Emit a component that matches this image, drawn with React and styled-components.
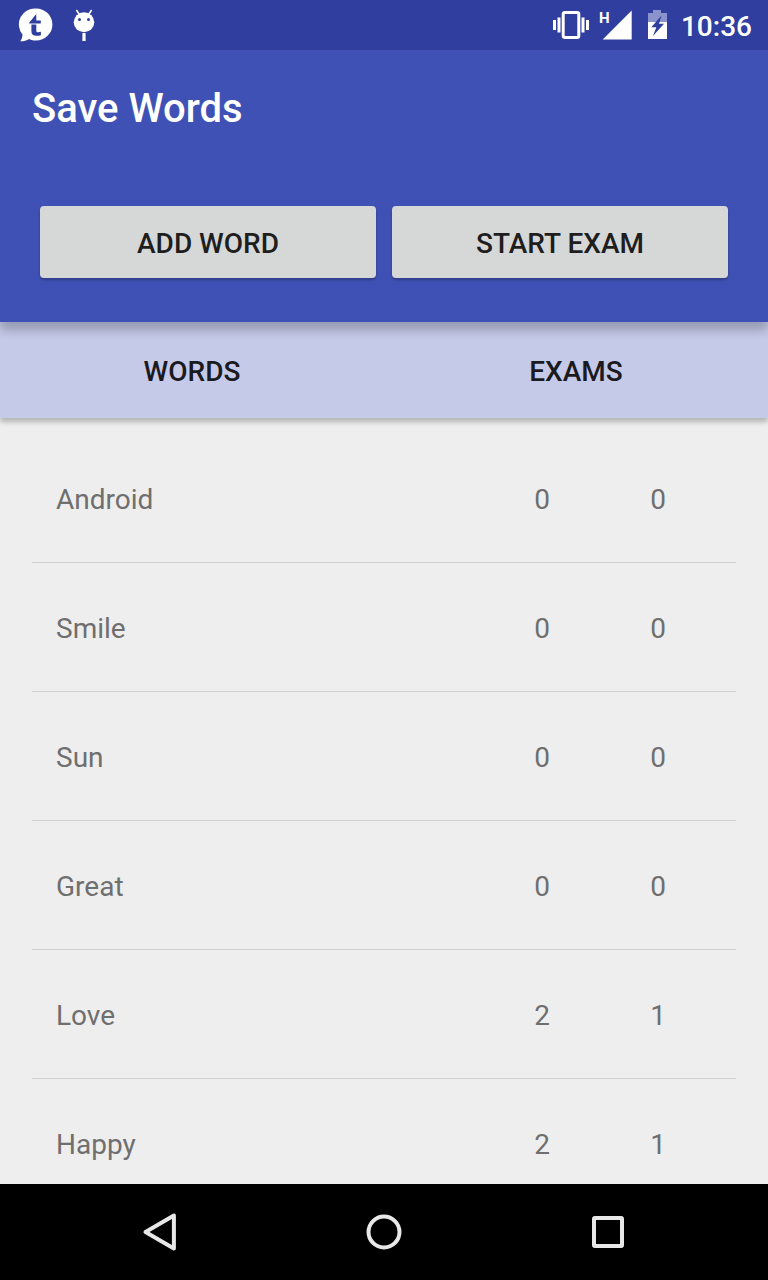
import React from "react";
import styled, { createGlobalStyle } from "styled-components";

const GlobalStyle = createGlobalStyle`
  *, *::before, *::after { box-sizing: border-box; }
  body {
    margin: 0;
    background: #eeeeee;
    font-family: Roboto, "Noto Sans", sans-serif;
  }
  button { font-family: inherit; }
`;

const Screen = styled.div`
  display: flex;
  flex-direction: column;
  height: 100vh;
  background: #eeeeee;
`;

const StatusBar = styled.div`
  display: flex;
  flex: none;
  align-items: center;
  justify-content: space-between;
  height: 50px;
  padding: 0 16px 0 18px;
  background: #303f9f;
  color: #ffffff;
`;

const StatusGroup = styled.div`
  display: flex;
  align-items: center;
  gap: ${(p) => p.$gap}px;
`;

const Clock = styled.time`
  padding-top: 4px;
  font-size: 28px;
  font-weight: 500;
  line-height: 32px;
`;

const Header = styled.header`
  position: relative;
  z-index: 2;
  flex: none;
  padding: 33px 32px 44px;
  background: #3f51b5;
  box-shadow: 0 8px 10px rgba(0, 0, 0, 0.24);
`;

const Title = styled.h1`
  margin: 0 0 71px;
  color: #ffffff;
  font-size: 40px;
  font-weight: 500;
  line-height: 52px;
`;

const Actions = styled.div`
  display: flex;
  gap: 16px;
  padding: 0 8px;
`;

const RaisedButton = styled.button`
  flex: 1;
  height: 72px;
  padding: 4px 0 0;
  border: 0;
  border-radius: 4px;
  background: #d6d7d7;
  box-shadow: 0 2px 3px rgba(0, 0, 0, 0.26);
  color: #1e1e1e;
  font-size: 28px;
  font-weight: 500;
  line-height: 32px;
`;

const TabBar = styled.nav`
  position: relative;
  z-index: 1;
  display: flex;
  flex: none;
  background: #c5cae9;
  box-shadow: 0 4px 5px rgba(0, 0, 0, 0.24);
`;

const Tab = styled.button`
  flex: 1;
  height: 96px;
  padding: 4px 0 0;
  border: 0;
  background: transparent;
  color: #1a1a1f;
  font-size: 28px;
  font-weight: 500;
  line-height: 32px;
`;

const List = styled.main`
  flex: 1;
  min-height: 0;
  padding: 16px 32px 0;
  overflow-y: auto;
  scrollbar-width: none;
`;

const WordTable = styled.table`
  width: 100%;
  border-collapse: separate;
  border-spacing: 0;
  table-layout: fixed;
  color: #6f6f6f;
  font-size: 28px;
  line-height: 32px;
`;

const WordCell = styled.th`
  height: 129px;
  padding: 4px 24px 0;
  border-bottom: 1px solid #d2d2d2;
  font-weight: 400;
  text-align: left;
`;

const CountCell = styled.td`
  width: ${(p) => (p.$last ? 136 : 116)}px;
  padding: 4px ${(p) => (p.$last ? 20 : 0)}px 0 0;
  border-bottom: 1px solid #d2d2d2;
  text-align: center;
`;

const NavBar = styled.nav`
  display: flex;
  flex: none;
  padding: 0 48px;
  background: #000000;
`;

const NavButton = styled.button`
  display: flex;
  flex: 1;
  align-items: center;
  justify-content: center;
  height: 96px;
  padding: 0;
  border: 0;
  background: transparent;
  color: #e8e8e8;
`;

const MessengerIcon = () => (
  <svg width="36" height="36" viewBox="0 0 36 36" aria-hidden="true">
    <path fill="#fff" d="M18 1.500A16.200 16 0 0 1 34.400 17.500 16.400 16 0 0 1 18 33.500c-2.500 0-4.800-.5-6.800-1.500C8.500 33.600 5.500 34.400 2.300 34.300c1.500-2.300 2.200-4.300 2.200-6.700A16 16 0 0 1 18 1.500z" />
    <path fill="#303f9f" d="M18.300 7v6.600h4.500v3H11.900c-.8 0-.9-.8-.4-1.400zM13.400 17.400h4.900v6.100c0 1.500.8 2 2.200 1.800l2.400-.5v3.400c-1.200.4-2.700.6-4 .6-3.500 0-5.500-1.500-5.500-4.900z" />
  </svg>
);

const DebugIcon = () => (
  <svg width="24" height="36" viewBox="0 0 24 36" aria-hidden="true">
    <ellipse cx="12" cy="15.300" rx="10.300" ry="10" fill="#fff" />
    <path d="M4.700 3.500l2.500 3.700M19.300 3.500l-2.500 3.700" stroke="#fff" strokeWidth="1.600" strokeLinecap="round" />
    <circle cx="7.500" cy="12.600" r="1.500" fill="#303f9f" />
    <circle cx="16.500" cy="12.600" r="1.500" fill="#303f9f" />
    <path d="M10.400 26h3.200v8h-3.200z" fill="#fff" />
  </svg>
);

const VibrateIcon = () => (
  <svg width="36" height="32" viewBox="0 0 36 32" aria-hidden="true">
    <rect x="10.200" y="3.500" width="15.600" height="25" rx="1.800" fill="none" stroke="#fff" strokeWidth="3" />
    <path fill="#fff" d="M0 11h3v10H0zM4.500 8.500h3v15h-3zM28.500 8.500h3v15h-3zM33 11h3v10h-3z" />
  </svg>
);

const SignalIcon = () => (
  <svg width="36" height="32" viewBox="0 0 36 32" aria-hidden="true">
    <text x="2" y="14" fill="#fff" fontSize="15" fontWeight="700" fontFamily="Roboto, sans-serif">H</text>
    <path fill="#fff" d="M34.700 1.500v29H5.700z" />
  </svg>
);

const BatteryIcon = () => (
  <svg width="20" height="32" viewBox="0 0 20 32" aria-hidden="true">
    <path fill="#8a93cb" d="M6 1h8v3h6v9H1V4h5z" />
    <path fill="#fff" d="M1 13h19v17H1z" />
    <path fill="#303f9f" d="M14.500 6.500L4.300 18.300h5L6 27 17 14.800h-5z" />
  </svg>
);

const BackIcon = () => (
  <svg width="40" height="40" viewBox="0 0 40 40" aria-hidden="true">
    <path d="M33.900 3.500v33L5.500 20z" fill="none" stroke="currentColor" strokeWidth="4" strokeLinejoin="round" />
  </svg>
);

const HomeIcon = () => (
  <svg width="40" height="40" viewBox="0 0 40 40" aria-hidden="true">
    <circle cx="20" cy="20" r="15.500" fill="none" stroke="currentColor" strokeWidth="4" />
  </svg>
);

const RecentIcon = () => (
  <svg width="40" height="40" viewBox="0 0 40 40" aria-hidden="true">
    <rect x="6" y="6" width="28" height="28" rx="1" fill="none" stroke="currentColor" strokeWidth="4" />
  </svg>
);

const words = [
  { word: "Android", seen: 0, passed: 0 },
  { word: "Smile", seen: 0, passed: 0 },
  { word: "Sun", seen: 0, passed: 0 },
  { word: "Great", seen: 0, passed: 0 },
  { word: "Love", seen: 2, passed: 1 },
  { word: "Happy", seen: 2, passed: 1 },
];

export default function App() {
  return (
    <>
      <GlobalStyle />
      <Screen>
        <StatusBar>
          <StatusGroup $gap={18}>
            <MessengerIcon />
            <DebugIcon />
          </StatusGroup>
          <StatusGroup $gap={14}>
            <StatusGroup $gap={8}>
              <VibrateIcon />
              <SignalIcon />
            </StatusGroup>
            <BatteryIcon />
            <Clock>10:36</Clock>
          </StatusGroup>
        </StatusBar>
        <Header>
          <Title>Save Words</Title>
          <Actions>
            <RaisedButton type="button">ADD WORD</RaisedButton>
            <RaisedButton type="button">START EXAM</RaisedButton>
          </Actions>
        </Header>
        <TabBar>
          <Tab type="button">WORDS</Tab>
          <Tab type="button">EXAMS</Tab>
        </TabBar>
        <List>
          <WordTable>
            <tbody>
              {words.map((item) => (
                <tr key={item.word}>
                  <WordCell scope="row">{item.word}</WordCell>
                  <CountCell>{item.seen}</CountCell>
                  <CountCell $last>{item.passed}</CountCell>
                </tr>
              ))}
            </tbody>
          </WordTable>
        </List>
        <NavBar>
          <NavButton type="button" aria-label="Back"><BackIcon /></NavButton>
          <NavButton type="button" aria-label="Home"><HomeIcon /></NavButton>
          <NavButton type="button" aria-label="Recent apps"><RecentIcon /></NavButton>
        </NavBar>
      </Screen>
    </>
  );
}
